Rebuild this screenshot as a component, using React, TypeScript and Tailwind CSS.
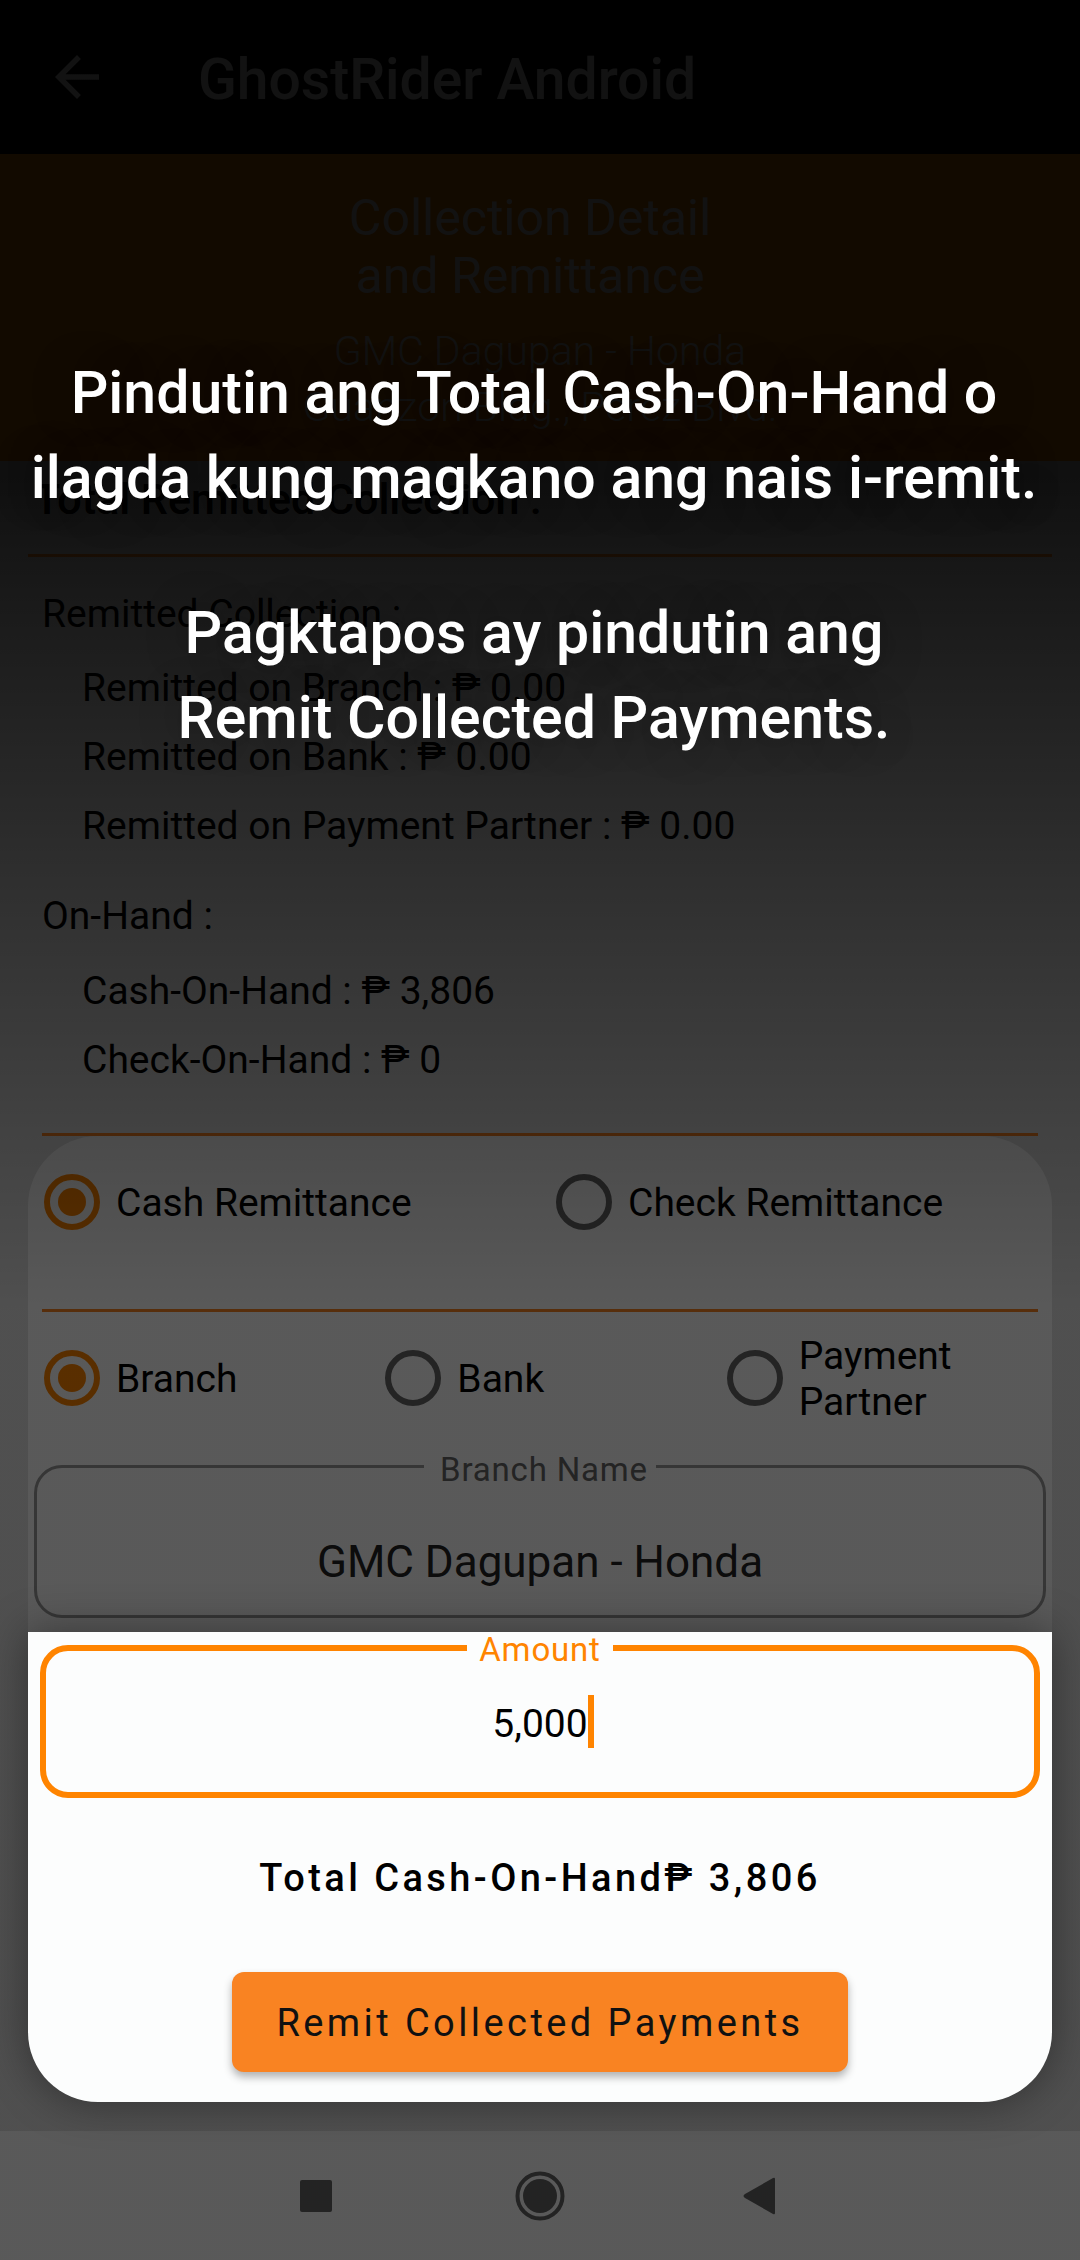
import { useId, useState } from "react";

const remitted = [
  "Remitted on Branch : ₱ 0.00",
  "Remitted on Bank : ₱ 0.00",
  "Remitted on Payment Partner : ₱ 0.00",
];

const onHand = ["Cash-On-Hand : ₱ 3,806", "Check-On-Hand : ₱ 0"];

function Rule({ className }: { className: string }) {
  return <hr className={`h-[3px] border-0 bg-[#f98322] ${className}`} />;
}

function RadioOption({
  name,
  label,
  checked,
  onSelect,
}: {
  name: string;
  label: string;
  checked: boolean;
  onSelect: () => void;
}) {
  const id = useId();
  return (
    <div className="flex items-center pl-4">
      <input
        id={id}
        type="radio"
        name={name}
        checked={checked}
        onChange={onSelect}
        className="grid size-14 shrink-0 appearance-none place-items-center rounded-full border-6 border-[#666] checked:border-[#ff8400] checked:before:size-7 checked:before:rounded-full checked:before:bg-[#ff8400]"
      />
      <label htmlFor={id} className="pt-0.5 pl-4 text-[39px] leading-[46px]">
        {label}
      </label>
    </div>
  );
}

function AppBar() {
  return (
    <header className="flex h-[154px] items-center bg-black pl-11 text-white">
      <button type="button" aria-label="Back">
        <svg viewBox="0 0 24 24" className="size-[66px]" fill="currentColor">
          <path d="M20 11H7.83l5.59-5.59L12 4l-8 8 8 8 1.41-1.41L7.83 13H20v-2z" />
        </svg>
      </button>
      <h1 className="pt-1 pl-[88px] text-[57px] leading-none font-medium">GhostRider Android</h1>
    </header>
  );
}

function Banner() {
  return (
    <section className="bg-[#ff8c00] pt-[35px] pb-[26px] text-center text-white">
      <h2 className="pr-5 text-[50px] leading-[58px]">
        Collection Detail
        <br />
        and Remittance
      </h2>
      <p className="mt-[18px] text-[41px] leading-[56px] font-light">
        GMC Dagupan - Honda
        <br />
        Guanzon Bldg., Perez Blvd.
      </p>
    </section>
  );
}

function Summary() {
  return (
    <section className="pt-[10px]">
      <h3 className="pl-[34px] text-[43px] leading-[56px] font-medium">Total Remitted Collection :</h3>
      <Rule className="mx-7 mt-[27px]" />
      <div className="px-[42px] pt-[34px] text-[39px] leading-[46px]">
        <h4>Remitted Collection :</h4>
        <ul className="mt-[17px] pl-10 leading-[69px]">
          {remitted.map((line) => (
            <li key={line}>{line}</li>
          ))}
        </ul>
        <h4 className="mt-8">On-Hand :</h4>
        <ul className="mt-[18px] pl-10 leading-[69px]">
          {onHand.map((line) => (
            <li key={line}>{line}</li>
          ))}
        </ul>
      </div>
      <Rule className="mx-[42px] mt-[38px]" />
    </section>
  );
}

function RemittanceForm() {
  const [kind, setKind] = useState("Cash Remittance");
  const [channel, setChannel] = useState("Branch");
  const [amount, setAmount] = useState("5,000");

  return (
    <form className="mx-7" onSubmit={(event) => event.preventDefault()}>
      <div className="rounded-t-[70px] bg-white pt-[38px] pb-[14px]">
        <div className="grid grid-cols-2">
          {["Cash Remittance", "Check Remittance"].map((label) => (
            <RadioOption
              key={label}
              name="kind"
              label={label}
              checked={kind === label}
              onSelect={() => setKind(label)}
            />
          ))}
        </div>
        <Rule className="mx-[14px] mt-[79px]" />
        <div className="mt-[19px] grid grid-cols-3">
          {["Branch", "Bank", "Payment Partner"].map((label) => (
            <RadioOption
              key={label}
              name="channel"
              label={label}
              checked={channel === label}
              onSelect={() => setChannel(label)}
            />
          ))}
        </div>
        <fieldset className="mx-[6px] mt-[25px] h-[168px] rounded-[28px] border-3 border-[#999]">
          <legend className="mx-auto pt-2 pr-2 pl-4 text-[33px] leading-6 text-[#666]">
            <label htmlFor="branch-name" className="tracking-wide">
              Branch Name
            </label>
          </legend>
          <input
            id="branch-name"
            readOnly
            value="GMC Dagupan - Honda"
            className="mt-13 w-full text-center text-[44px] leading-[56px] text-[#222] outline-none"
          />
        </fieldset>
      </div>

      <div className="relative z-20 flex flex-col items-stretch rounded-b-[70px] bg-[#fcfdfd] pb-[30px] shadow-[0_0_44px_rgba(0,0,0,0.4)]">
        <fieldset className="mx-3 h-[166px] rounded-[28px] border-6 border-[#ff8400]">
          <legend className="mx-auto px-3 pt-1 text-[33px] leading-7 text-[#ff8400]">
            <label htmlFor="amount" className="tracking-wide">
              Amount
            </label>
          </legend>
          <div className="mt-[31px] flex items-center justify-center">
            <input
              id="amount"
              value={amount}
              inputMode="numeric"
              onChange={(event) => setAmount(event.target.value)}
              className="ml-[6px] field-sizing-content pt-1 text-center text-[39px] leading-[46px] caret-[#ff8400] outline-none"
            />
            <span aria-hidden="true" className="h-[53px] w-[6px] bg-[#ff8400]" />
          </div>
        </fieldset>
        <p className="mt-[57px] text-center text-[38px] leading-[46px] font-medium tracking-[0.09em]">
          Total Cash-On-Hand₱ 3,806
        </p>
        <button
          type="submit"
          className="mt-[71px] h-[100px] self-center rounded-xl bg-[#f98322] px-11 pt-0.5 text-[38px] leading-[46px] tracking-[0.09em] text-[#111] shadow-[0_5px_8px_rgba(0,0,0,0.3)]"
        >
          Remit Collected Payments
        </button>
      </div>
    </form>
  );
}

function SystemNav() {
  return (
    <nav className="mt-[29px] flex h-[129px] items-center justify-center gap-[172px] bg-white text-[#646464]">
      <button type="button" aria-label="Recent apps">
        <svg viewBox="0 0 50 50" className="size-[50px]" fill="currentColor">
          <rect x="7" y="9" width="32" height="32" rx="2" />
        </svg>
      </button>
      <button type="button" aria-label="Home">
        <svg viewBox="0 0 50 50" className="size-[50px]" fill="currentColor">
          <circle cx="25" cy="25" r="22.5" fill="none" stroke="currentColor" strokeWidth="4" />
          <circle cx="25" cy="25" r="17" />
        </svg>
      </button>
      <button type="button" aria-label="Back">
        <svg viewBox="0 0 50 50" className="size-[50px]" fill="currentColor">
          <path d="M38 8v34q0 2-2 1L8 27q-3-2 0-4L36 7q2-1 2 1z" />
        </svg>
      </button>
    </nav>
  );
}

function Coachmark() {
  return (
    <div className="pointer-events-none absolute inset-0 z-10 bg-linear-to-b from-black/93 from-[21%] to-black/65 to-[58%] pt-[350px] pr-3 text-center text-[59px] leading-[85px] font-medium text-white [text-shadow:0_0_40px_rgba(0,0,0,0.35)]">
      <p>
        Pindutin ang Total Cash-On-Hand o
        <br />
        ilagda kung magkano ang nais i-remit.
      </p>
      <p className="mt-[70px]">
        Pagktapos ay pindutin ang
        <br />
        Remit Collected Payments.
      </p>
    </div>
  );
}

export default function App() {
  return (
    <main className="relative bg-[#e3e3e3] font-[Roboto,sans-serif] text-black">
      <AppBar />
      <Banner />
      <Summary />
      <RemittanceForm />
      <SystemNav />
      <Coachmark />
    </main>
  );
}
